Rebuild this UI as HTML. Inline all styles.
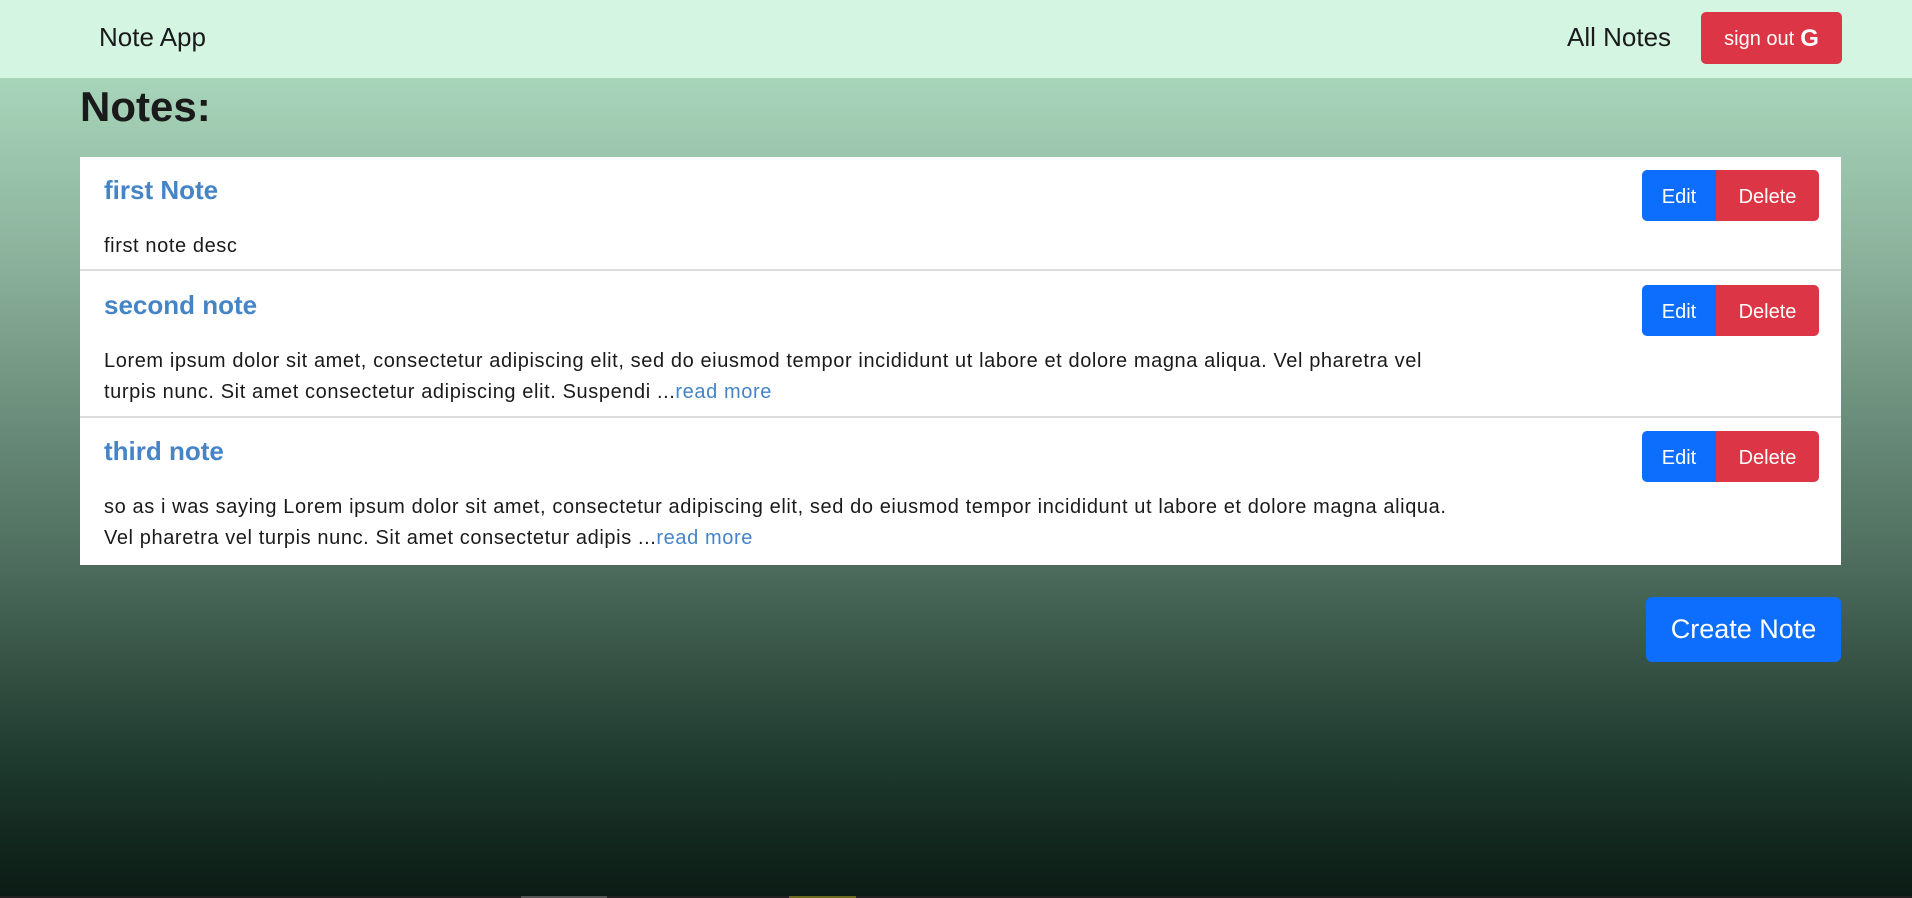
<!DOCTYPE html>
<html><head><meta charset="utf-8"><style>
*{box-sizing:border-box;margin:0;padding:0}
html,body{width:1912px;height:898px;overflow:hidden}
body{font-family:"Liberation Sans",sans-serif;background:linear-gradient(180deg,#a7d5ba 78px,#8db39d 250px,#4c6b5c 570px,#1e3a2e 760px,#0b1b15 896px);position:relative;color:#1a1a1a}
.nav{position:absolute;left:0;top:0;width:1912px;height:78px;background:#d5f5e3}
.brand{position:absolute;left:99px;top:22px;font-size:26px}
.all{position:absolute;left:1567px;top:22px;font-size:26px}
.so{position:absolute;left:1701px;top:12px;width:141px;height:52px;background:#dc3545;border-radius:5px;color:#fff;font-size:20px;display:flex;align-items:center;justify-content:center;gap:6px;padding-top:2px}
.so b{font-size:24px;font-weight:900}
h1{position:absolute;left:80px;top:83px;font-size:42px;font-weight:bold}
.card{position:absolute;left:80px;width:1761px;background:#fff;border-bottom:2px solid #ddd}
.t{position:absolute;left:24px;font-size:26px;font-weight:bold;color:#4584c6}
.d{position:absolute;left:24px;font-size:20px;letter-spacing:0.6px;line-height:31px;white-space:nowrap}
.d a{color:#4584c6}
.e{position:absolute;left:1562px;width:74px;height:51px;background:#0d6efd;color:#fff;border-radius:5px 0 0 5px;font-size:20px;display:flex;align-items:center;justify-content:center;padding-top:3px}
.x{position:absolute;left:1636px;width:103px;height:51px;background:#dc3545;color:#fff;border-radius:0 5px 5px 0;font-size:20px;display:flex;align-items:center;justify-content:center;padding-top:3px}
.cn{position:absolute;left:1646px;top:597px;width:195px;height:65px;background:#0d6efd;color:#fff;border-radius:6px;font-size:27px;display:flex;align-items:center;justify-content:center}
.strip{position:absolute;left:0;top:896px;width:1912px;height:2px;background:#222}
</style></head><body>
<div class="nav"><div class="brand">Note App</div><div class="all">All Notes</div><div class="so">sign out <b>G</b></div></div>
<h1>Notes:</h1>
<div class="card" style="top:157px;height:114px">
<div class="t" style="top:18px">first Note</div>
<div class="d" style="top:74px">first note desc</div>
<div class="e" style="top:13px">Edit</div><div class="x" style="top:13px">Delete</div>
</div>
<div class="card" style="top:271px;height:147px">
<div class="t" style="top:19px">second note</div>
<div class="d" style="top:75px">Lorem ipsum dolor sit amet, consectetur adipiscing elit, sed do eiusmod tempor incididunt ut labore et dolore magna aliqua. Vel pharetra vel<br>turpis nunc. Sit amet consectetur adipiscing elit. Suspendi ...<a>read more</a></div>
<div class="e" style="top:14px">Edit</div><div class="x" style="top:14px">Delete</div>
</div>
<div class="card" style="top:418px;height:147px;border-bottom:none">
<div class="t" style="top:18px">third note</div>
<div class="d" style="top:74px">so as i was saying Lorem ipsum dolor sit amet, consectetur adipiscing elit, sed do eiusmod tempor incididunt ut labore et dolore magna aliqua.<br>Vel pharetra vel turpis nunc. Sit amet consectetur adipis ...<a>read more</a></div>
<div class="e" style="top:13px">Edit</div><div class="x" style="top:13px">Delete</div>
</div>
<div class="cn">Create Note</div>
<div class="strip"><div style="position:absolute;left:521px;width:86px;height:2px;background:#555"></div><div style="position:absolute;left:789px;width:67px;height:2px;background:#6b6a1f"></div></div>
</body></html>
